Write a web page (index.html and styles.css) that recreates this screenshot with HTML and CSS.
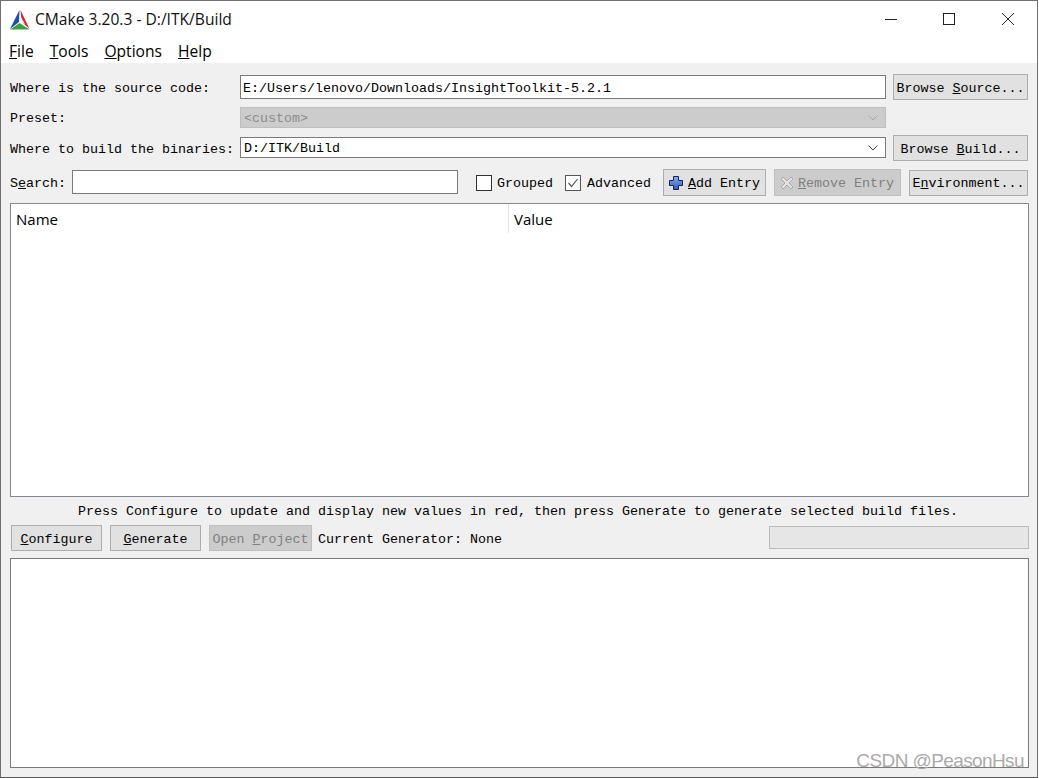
FILE: index.html
```html
<!DOCTYPE html>
<html lang="en">
<head>
<meta charset="utf-8">
<title>CMake 3.20.3 - D:/ITK/Build</title>
<link rel="stylesheet" href="styles.css">
</head>
<body>
<div class="window">
  <header class="titlebar">
    <svg class="logo" width="22" height="22" viewBox="0 0 22 22">
      <path d="M10.5 1 L1 20 L10 13 Z" fill="#1f4f9e"/>
      <path d="M11.5 1 L20.5 20 L13 13 L12 7 Z" fill="#d0262c"/>
      <path d="M1 20.5 L10.5 14 L20.5 20.5 Z" fill="#3c9f45"/>
      <path d="M10.5 6 L10.5 13 L16 15 Z" fill="#f2f2f2"/>
    </svg>
    <span class="title">CMake 3.20.3 - D:/ITK/Build</span>
    <div class="winbtns">
      <svg class="winbtn" width="58" height="36" viewBox="0 0 58 36"><path d="M23 18.5 H35" stroke="#222" fill="none"/></svg>
      <svg class="winbtn" width="58" height="36" viewBox="0 0 58 36"><rect x="23.5" y="12.5" width="11" height="11" stroke="#222" fill="none"/></svg>
      <svg class="winbtn winbtn-close" width="58" height="36" viewBox="0 0 58 36"><path d="M23 12 L35 24 M35 12 L23 24" stroke="#222" fill="none"/></svg>
    </div>
  </header>
  <nav class="menubar">
    <span><u>F</u>ile</span>
    <span><u>T</u>ools</span>
    <span><u>O</u>ptions</span>
    <span><u>H</u>elp</span>
  </nav>
  <main class="content">
    <div class="row row-source">
      <label class="lbl">Where is the source code:</label>
      <div class="field field-source">E:/Users/lenovo/Downloads/InsightToolkit-5.2.1</div>
      <button class="btn btn-browse">Browse <u>S</u>ource...</button>
    </div>
    <div class="row row-preset">
      <label class="lbl">Preset:</label>
      <div class="field combo disabled">
        <span>&lt;custom&gt;</span>
        <svg class="chev" width="10" height="6" viewBox="0 0 10 6"><path d="M0.5 0.5 L5 5 L9.5 0.5" stroke="#a8a8a8" fill="none"/></svg>
      </div>
      <div class="spacer-browse"></div>
    </div>
    <div class="row row-build">
      <label class="lbl">Where to build the binaries:</label>
      <div class="field combo">
        <span>D:/ITK/Build</span>
        <svg class="chev" width="10" height="6" viewBox="0 0 10 6"><path d="M0.5 0.5 L5 5 L9.5 0.5" stroke="#444" fill="none"/></svg>
      </div>
      <button class="btn btn-browse">Browse <u>B</u>uild...</button>
    </div>
    <div class="row row-search">
      <label class="lbl lbl-search">S<u>e</u>arch:</label>
      <div class="field field-search"></div>
      <span class="check check-first"><i class="box"></i>Grouped</span>
      <span class="check check-second"><i class="box box-on"><svg width="14" height="14" viewBox="0 0 14 14"><path d="M2.5 7 L5.5 10.5 L11.5 3" stroke="#555" stroke-width="1.2" fill="none"/></svg></i>Advanced</span>
      <button class="btn btn-add">
        <svg width="14" height="14" viewBox="0 0 14 14"><defs><linearGradient id="plus" x1="0" y1="0" x2="0" y2="1"><stop offset="0" stop-color="#8fb0ea"/><stop offset="1" stop-color="#2f55b8"/></linearGradient></defs><path d="M4.5 0.5 H9.5 V4.5 H13.5 V9.5 H9.5 V13.5 H4.5 V9.5 H0.5 V4.5 H4.5 Z" fill="url(#plus)" stroke="#14235f"/></svg>
        <span><u>A</u>dd Entry</span>
      </button>
      <button class="btn btn-remove disabled">
        <svg width="14" height="14" viewBox="0 0 14 14"><path d="M1 3 L3 1 L7 5 L11 1 L13 3 L9 7 L13 11 L11 13 L7 9 L3 13 L1 11 L5 7 Z" fill="#e2e2e2" stroke="#a9a9a9"/></svg>
        <span><u>R</u>emove Entry</span>
      </button>
      <button class="btn btn-env">E<u>n</u>vironment...</button>
    </div>
    <section class="table">
      <div class="thead">
        <div class="th th-name">Name</div>
        <div class="th th-value">Value</div>
      </div>
    </section>
    <p class="hint">Press Configure to update and display new values in red, then press Generate to generate selected build files.</p>
    <div class="row row-actions">
      <button class="btn btn-action"><u>C</u>onfigure</button>
      <button class="btn btn-action"><u>G</u>enerate</button>
      <button class="btn btn-open disabled">Open <u>P</u>roject</button>
      <span class="generator">Current Generator: None</span>
      <div class="progress"></div>
    </div>
    <section class="output"></section>
  </main>
  <div class="watermark">CSDN @PeasonHsu</div>
</div>
</body>
</html>
```
FILE: styles.css
```css
* { box-sizing: border-box; }
html, body { margin: 0; padding: 0; }
body { width: 1039px; height: 778px; overflow: hidden; background: #fff; }

.window {
  position: relative;
  width: 1038px;
  height: 778px;
  display: flex;
  flex-direction: column;
  border: 1px solid #6f6f6f;
  border-bottom: 1px solid #555;
  background: #f0f0f0;
  font-family: "Liberation Mono", "DejaVu Sans Mono", monospace;
  font-size: 13.33px;
  color: #000;
}

.titlebar {
  height: 37px;
  flex: none;
  background: #fff;
  display: flex;
  align-items: center;
  padding-left: 8px;
}
.logo { flex: none; align-self: flex-start; margin-top: 8px; }
.title {
  margin-left: 4px;
  margin-bottom: 2px;
  font-family: "Open Sans", "Noto Sans", sans-serif;
  font-size: 15.6px;
  color: #111;
  white-space: nowrap;
}
.winbtns { margin-left: auto; align-self: flex-start; display: flex; }
.winbtn-close { margin-left: 1px; }

.menubar {
  height: 25px;
  flex: none;
  background: #fff;
  display: flex;
  gap: 16px;
  padding-left: 8px;
  font-family: "Open Sans", "Noto Sans", sans-serif;
  font-size: 15.6px;
  line-height: 26px;
}

.content {
  flex: 1;
  min-height: 0;
  display: flex;
  flex-direction: column;
  padding: 11px 8px 9px 9px;
}

.row { display: flex; align-items: center; flex: none; }
.lbl { width: 230px; flex: none; white-space: nowrap; padding-top: 2px; }
.field {
  flex: 1;
  min-width: 0;
  background: #fff;
  border: 1px solid #7a7a7a;
  padding-left: 2px;
  white-space: nowrap;
}
.combo { display: flex; align-items: center; justify-content: space-between; padding: 2px 7px 0 3px; }
.chev { flex: none; margin-top: -2px; }
.field.disabled { background: #cccccc; border-color: #bfbfbf; color: #8c8c8c; }

.btn {
  font: inherit;
  color: inherit;
  background: #e1e1e1;
  border: 1px solid #adadad;
  padding: 2px 0 0;
  white-space: nowrap;
  flex: none;
}
.btn.disabled { background: #cccccc; border-color: #bfbfbf; color: #808080; }

.row-source { height: 26px; padding-right: 1px; }
.row-source .field { height: 24px; line-height: 25px; }
.btn-browse { width: 135px; height: 26px; margin-left: 7px; }
.spacer-browse { width: 143px; flex: none; }

.row-preset { height: 21px; margin-top: 7px; }
.row-preset .field { height: 21px; }

.row-build { height: 26px; margin-top: 7px; padding-right: 1px; }
.row-build .field { height: 21px; align-self: flex-start; margin-top: 2px; }

.row-search { height: 27px; margin-top: 8px; }
.lbl-search { width: 62px; }
.field-search { flex: none; width: 386px; height: 24px; align-self: flex-start; margin-top: 1px; }
.check { display: flex; align-items: center; gap: 5px; flex: none; white-space: nowrap; padding-top: 2px; }
.check-first { margin-left: 18px; }
.check-second { margin-left: 12px; gap: 6px; }
.box {
  width: 16px;
  height: 16px;
  margin-top: -2px;
  background: #fff;
  border: 1px solid #333;
  display: flex;
  align-items: center;
  justify-content: center;
}
.box-on { border-color: #555; }
.btn-add, .btn-remove { display: flex; align-items: center; height: 27px; }
.btn-add { width: 103px; margin-left: 12px; padding-left: 5px; gap: 5px; }
.btn-remove { width: 127px; margin-left: 8px; padding-left: 5px; gap: 4px; }
.btn-add svg, .btn-remove svg { margin-top: -2px; }
.btn-env { width: 119px; height: 26px; margin-left: 8px; }

.table {
  height: 294px;
  flex: none;
  margin-top: 7px;
  background: #fff;
  border: 1px solid #828790;
}
.thead { display: flex; height: 29px; }
.th {
  font-family: "Open Sans", "Noto Sans", sans-serif;
  font-size: 15px;
  line-height: 30px;
  padding-left: 5px;
}
.th-name { width: 498px; border-right: 1px solid #e5e5e5; }

.hint {
  margin: 6px 0 0;
  height: 22px;
  line-height: 18px;
  padding-right: 3px;
  text-align: center;
  flex: none;
}

.row-actions { height: 26px; padding-left: 1px; }
.btn-action { width: 91px; height: 26px; margin-right: 8px; }
.btn-open { width: 103px; height: 26px; }
.generator { margin-left: 6px; white-space: nowrap; padding-top: 2px; }
.progress {
  margin-left: auto;
  align-self: flex-start;
  margin-top: 1px;
  width: 260px;
  height: 23px;
  background: #e6e6e6;
  border: 1px solid #bcbcbc;
}

.output {
  flex: 1;
  min-height: 0;
  margin-top: 7px;
  background: #fff;
  border: 1px solid #7a7a7a;
}

.watermark {
  position: absolute;
  right: 13px;
  bottom: 5px;
  font-family: "Liberation Sans", sans-serif;
  font-size: 19px;
  letter-spacing: -0.6px;
  color: #aaaaaa;
  white-space: nowrap;
}
```
